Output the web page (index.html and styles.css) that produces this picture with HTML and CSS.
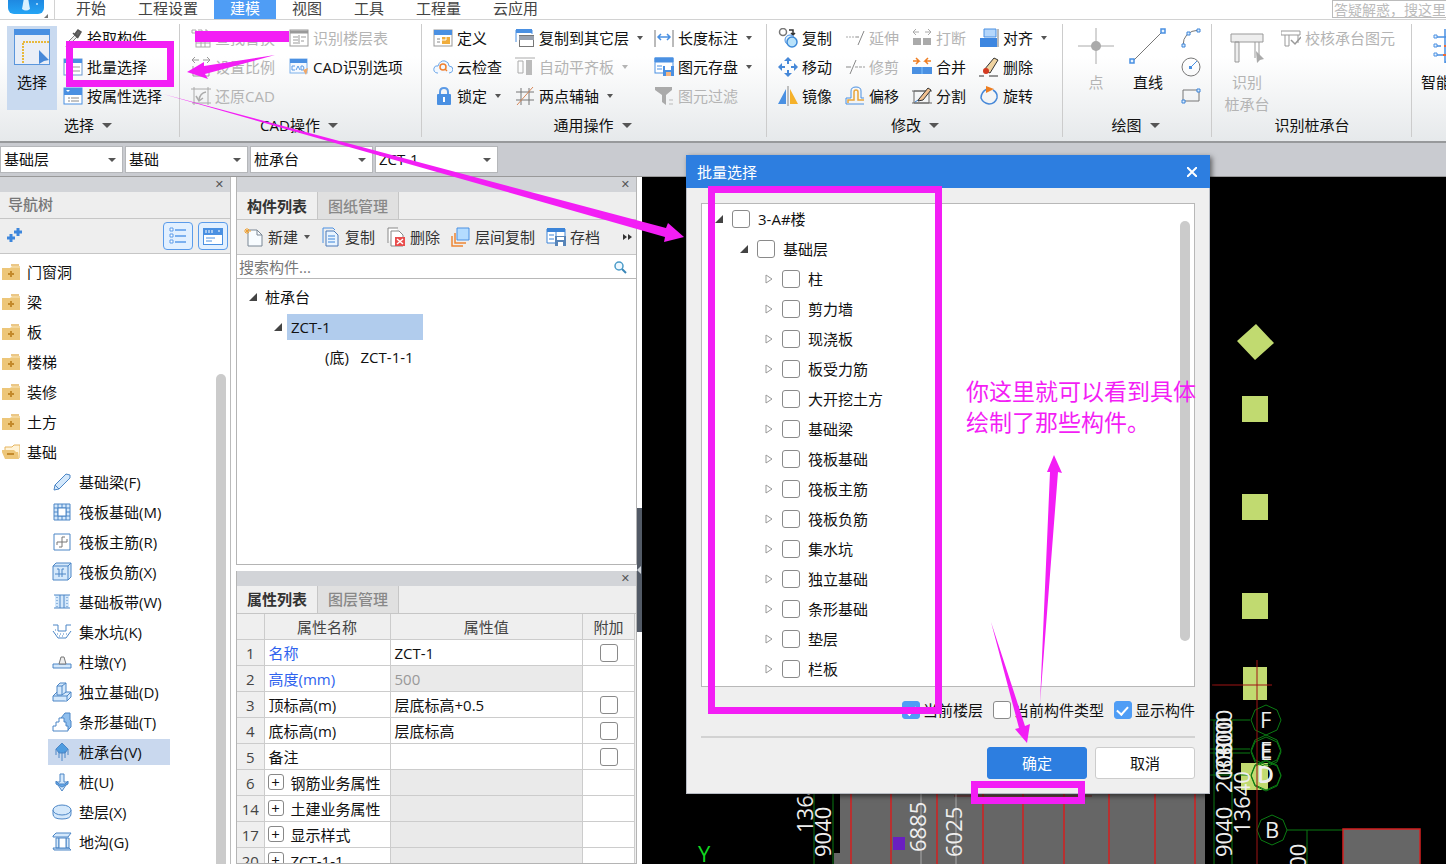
FILE: index.html
```
<!DOCTYPE html>
<html lang="zh-CN">
<head>
<meta charset="utf-8">
<title>批量选择</title>
<link rel="stylesheet" href="styles.css">
</head>
<body>
<svg class="defs" width="0" height="0" aria-hidden="true">
  <symbol id="folder" viewBox="0 0 18 16"><path d="M0 4h18v12H0z" fill="#edc679"/><path d="M9 1h8" stroke="#e5b45f" stroke-width="1.500"/><path d="M8 4l2-2h8v2" fill="#f3d79d"/><path d="M6 10h6M9 7v6" stroke="#c48a2c" stroke-width="2"/></symbol>
  <symbol id="open" viewBox="0 0 8 8"><path d="M8 0v8H0z" fill="#444"/></symbol>
  <symbol id="shut" viewBox="0 0 8 10"><path d="M1 1l6 4-6 4z" fill="#fff" stroke="#999"/></symbol>
</svg>
<header class="menubar">
  <div class="logo"><svg width="54" height="20" viewBox="0 0 54 20"><defs><linearGradient id="lg" x1="0" y1="0" x2="0" y2="1"><stop offset="0" stop-color="#1660c4"/><stop offset="1" stop-color="#25a5f5"/></linearGradient></defs><rect x="8" y="-20" width="36" height="34" rx="6" fill="url(#lg)"/><path d="M24-2h4l2 11q-4 3-8 0z" fill="#d8f0ff"/><circle cx="37" cy="4" r="1" fill="#bfe4ff"/><path d="M48 14v4h-4z" fill="#777"/></svg></div>
  <nav class="menu"><button>开始</button><button>工程设置</button><button class="active">建模</button><button>视图</button><button>工具</button><button>工程量</button><button>云应用</button></nav>
  <input class="ask" type="text" aria-label="答疑解惑" placeholder="答疑解惑，搜这里">
</header>

<section class="ribbon">
  <div class="group g1">
    <div class="tools">
      <button class="big on"><svg width="36" height="36" viewBox="0 0 36 36"><rect x=".5" y=".5" width="35" height="35" fill="#e9eef7" stroke="#5a96dc"/><rect width="36" height="6" fill="#4a90e2"/><path d="M9 34V13h26" fill="none" stroke="#e8b93c" stroke-width="2" stroke-dasharray="2 1"/><path d="M25 21l10 10-5 1-5 3z" fill="#4688d8"/></svg>选择</button>
      <button><svg width="20" height="20" viewBox="0 0 20 20"><path d="M3 19l2-5 7-7 2 2-7 7z" fill="#eee" stroke="#888"/><path d="M10 5l5 5M12 6l3-4 3 2-3 5z" stroke="#555" stroke-width="1.500" fill="#666"/></svg>拾取构件</button>
      <button><svg width="20" height="20" viewBox="0 0 20 20"><rect x="1" y="2" width="18" height="16" fill="#fff" stroke="#6a98cf"/><path d="M1 2h18v4H1z" fill="#4a90e2"/><path d="M4 10h2m3 0h8M4 14h2m3 0h8" stroke="#999"/></svg>批量选择</button>
      <button><svg width="20" height="20" viewBox="0 0 20 20"><rect x="1" y="2" width="18" height="16" fill="#fff" stroke="#4a90e2"/><path d="M1 2h18v7H1z" fill="#4a90e2"/><path d="M3 4h4L5 6z" fill="#fff"/><path d="M5 12h2m1 0h8M5 15h2m1 0h8" stroke="#888"/></svg>按属性选择</button>
    </div>
    <button class="caption">选择<i class="arrow lg"></i></button>
  </div>
  <div class="group g2">
    <div class="tools">
      <button disabled><svg width="20" height="20" viewBox="0 0 20 20" fill="none" stroke="#aaa"><path d="M1 2h4v3H1zM7 2h4v3M14 2h2v4"/><rect x="5" y="8" width="14" height="11"/><path d="M5 12h14M5 15h14M10 8v11M14 8v11"/></svg>查找替换</button>
      <button disabled><svg width="20" height="20" viewBox="0 0 20 20" fill="none" stroke="#999"><path d="M8 3H1l3-3M1 3l3 3M12 3h7l-3-3m3 3l-3 3M2 9v10h16V9"/><path d="M5 15h3m3 0h3" stroke-width="3"/></svg>设置比例</button>
      <button disabled><svg width="20" height="20" viewBox="0 0 20 20" fill="none" stroke="#aaa"><path d="M3 1v18M17 1v18M0 3h20M1 17h19"/><path d="M15 6q-6 1-7 8" stroke-width="1.500"/><path d="M5 10l3 5 4-3" stroke-width="1.500"/></svg>还原CAD</button>
      <button disabled><svg width="20" height="20" viewBox="0 0 20 20" fill="none" stroke="#999"><rect x="1" y="2" width="18" height="16"/><path d="M1 4h18" stroke-width="3"/><path d="M4 9h5M4 12h5M4 15h5M10 7v9M12 9h5M12 13h3"/></svg>识别楼层表</button>
      <button><svg width="20" height="20" viewBox="0 0 20 20"><rect x="1" y="2" width="17" height="14" fill="#f4f9ff" stroke="#7db0ea"/><path d="M1 2h17v4H1z" fill="#4a90e2"/><path d="M6 9H3v4h3M7 13l2-4 2 4M12 9v4h2q2-2 0-4z" fill="none" stroke="#5a9be6"/><path d="M14 13l5-2-2 7z" fill="#f0a868"/></svg>CAD识别选项</button>
    </div>
    <button class="caption">CAD操作<i class="arrow lg"></i></button>
  </div>
  <div class="group g3">
    <div class="tools">
      <button><svg width="20" height="20" viewBox="0 0 20 20"><rect x="1" y="2" width="18" height="16" fill="#fff" stroke="#999"/><path d="M1 2h18v5H1z" fill="#4a90e2"/><path d="M4 11h3m-3 3h3" stroke="#888"/><path d="M9 9h8v7H9z" fill="#f0ad3c"/><path d="M13 9v3H9" stroke="#fff" fill="none"/></svg>定义</button>
      <button><svg width="20" height="20" viewBox="0 0 20 20"><path d="M5 16H4q-4-1-3-5 1-3 4-2 2-6 7-5 4 1 4 5 4 0 4 4-1 3-4 3" fill="#f2f8ff" stroke="#6aa5e8"/><circle cx="10" cy="10" r="3" fill="none" stroke="#f08030" stroke-width="1.500"/><path d="M12 12l2 2" stroke="#f08030" stroke-width="1.500"/></svg>云检查</button>
      <button><svg width="20" height="20" viewBox="0 0 20 20"><path d="M7 9V6q0-4 4-4t4 4v3" fill="none" stroke="#5b9ae6" stroke-width="2"/><rect x="4" y="8" width="14" height="11" rx="1" fill="#4a90e2"/><path d="M11 11v5" stroke="#fff" stroke-width="2"/></svg>锁定<i class="arrow"></i></button>
      <button><svg width="20" height="20" viewBox="0 0 20 20"><path d="M1 14V2h16v4" fill="none" stroke="#4a90e2"/><path d="M1 1h16v4H1z" fill="#4a90e2"/><rect x="4.500" y="7.500" width="14" height="11" fill="#fff" stroke="#777"/><path d="M4 8h15v4H4z" fill="#98a1af"/></svg>复制到其它层<i class="arrow"></i></button>
      <button disabled><svg width="20" height="20" viewBox="0 0 20 20"><path d="M0 1h20" stroke="#aaa"/><path d="M3 4h5v12H3z" fill="none" stroke="#aaa"/><path d="M11 3h6v15h-6z" fill="#bbb"/></svg>自动平齐板<i class="arrow"></i></button>
      <button><svg width="20" height="20" viewBox="0 0 20 20"><path d="M6 2v17M14 2v17M1 6h18M1 14h18" stroke="#777"/><path d="M2 19L18 1" stroke="#d6885b"/></svg>两点辅轴<i class="arrow"></i></button>
      <button><svg width="20" height="20" viewBox="0 0 20 20"><path d="M1 2v17M19 2v17" stroke="#777"/><path d="M4 9h12M7 6L4 9l3 3M13 6l3 3-3 3" fill="none" stroke="#4a90e2" stroke-width="1.500"/></svg>长度标注<i class="arrow"></i></button>
      <button><svg width="20" height="20" viewBox="0 0 20 20"><rect x="1" y="1" width="18" height="15" fill="#fff" stroke="#4a90e2"/><path d="M1 1h18v4H1zM3 9h5M3 12h5" fill="#4a90e2" stroke="#4a90e2"/><rect x="9" y="9" width="11" height="10" fill="#4a90e2"/><path d="M11 9h6v4h-6z" fill="#fff"/><path d="M12 15h5v4h-5z" fill="#f5b580"/></svg>图元存盘<i class="arrow"></i></button>
      <button disabled><svg width="20" height="20" viewBox="0 0 20 20"><path d="M1 1h17v3l-6 5v10l-4-3V9L1 4z" fill="#aaa"/><path d="M15 14h4m-4 4h4" stroke="#bbb"/></svg>图元过滤</button>
    </div>
    <button class="caption">通用操作<i class="arrow lg"></i></button>
  </div>
  <div class="group g4">
    <div class="tools">
      <button><svg width="20" height="20" viewBox="0 0 20 20" fill="none"><circle cx="5" cy="4" r="3.500" stroke="#777" stroke-width="1.500"/><path d="M11 2h4v4m-2-1l2 2 2-2" stroke="#333" stroke-width="1.500"/><circle cx="12" cy="12" r="5" fill="#e4f4fe" stroke="#4a90e2"/><circle cx="14" cy="14" r="5" fill="#b9e2fa" stroke="#3e8ad8" stroke-width="1.500"/></svg>复制</button>
      <button><svg width="20" height="20" viewBox="0 0 20 20"><path d="M10 0l4 4h-3v3H9V4H6zM10 20l4-4h-3v-3H9v3H6zM0 10l4-4v3h3v2H4v3zM20 10l-4-4v3h-3v2h3v3z" fill="#4688d8"/></svg>移动</button>
      <button><svg width="20" height="20" viewBox="0 0 20 20"><path d="M8 3v15H0z" fill="#4a90e2"/><path d="M12 3v15h8z" fill="#f5b12a"/><path d="M10 0v20" stroke="#888"/></svg>镜像</button>
      <button disabled><svg width="20" height="20" viewBox="0 0 20 20"><path d="M1 9h10" stroke="#aaa" stroke-dasharray="2 1"/><path d="M11 9h3M19 3l-6 14" stroke="#888"/></svg>延伸</button>
      <button disabled><svg width="20" height="20" viewBox="0 0 20 20"><path d="M1 10h5M11 3L5 17" stroke="#888"/><path d="M10 10h10" stroke="#999" stroke-dasharray="3 1"/></svg>修剪</button>
      <button><svg width="20" height="20" viewBox="0 0 20 20" fill="none"><path d="M1 18v-6h5V5q0-4 5-4t5 4v7h3" stroke="#4a90e2"/><path d="M3 17v-3h6V6q0-2 2-2t2 2v8h6" stroke="#e8a53c" stroke-width="1.500"/><path d="M1 18h18" stroke="#4a90e2"/></svg>偏移</button>
      <button disabled><svg width="20" height="20" viewBox="0 0 20 20"><path d="M1 10h8v7H1zM11 10h8v7h-8z" fill="#aaa"/><path d="M7 4H1l3-3M1 4l3 3M13 4h6l-3-3m3 3l-3 3" fill="none" stroke="#aaa"/></svg>打断</button>
      <button><svg width="20" height="20" viewBox="0 0 20 20"><path d="M0 10h20v7H0z" fill="#4a90e2"/><path d="M10 10v7" stroke="#7ec3ff"/><path d="M1 4h6L4 1m3 3L4 7M19 4h-6l3-3m-3 3l3 3" fill="none" stroke="#ef7e22" stroke-width="1.500"/></svg>合并</button>
      <button><svg width="20" height="20" viewBox="0 0 20 20" fill="none"><path d="M2 5h15v12H2zM0 5h20M0 17h20" stroke="#666"/><path d="M3 16L14 9" stroke="#3c84d8"/><path d="M7 13l9-11 3 2-8 10-5 1z" fill="#f0c090" stroke="#333"/></svg>分割</button>
      <button><svg width="20" height="20" viewBox="0 0 20 20"><path d="M5 1h12v8H5z" fill="#b4d6fb" stroke="#4a90e2"/><path d="M1 10h17v9H1z" fill="#3d86e0"/><path d="M19 1v18" stroke="#777"/></svg>对齐<i class="arrow"></i></button>
      <button><svg width="20" height="20" viewBox="0 0 20 20"><path d="M5 13L15 1l4 2-8 13z" fill="#f0d3a0" stroke="#333"/><circle cx="7" cy="14" r="3" fill="#d33a20"/><path d="M0 19h5m5 0h9" stroke="#333"/></svg>删除</button>
      <button><svg width="20" height="20" viewBox="0 0 20 20"><path d="M14 4q5 3 4 8-2 6-8 6-6-1-8-6 0-6 6-9" fill="none" stroke="#4688d8" stroke-width="1.500"/><path d="M7 0l8 3-8 4z" fill="#ed7d20"/></svg>旋转</button>
    </div>
    <button class="caption">修改<i class="arrow lg"></i></button>
  </div>
  <div class="group g5">
    <div class="tools">
      <button class="big" disabled><svg width="36" height="36" viewBox="0 0 36 36"><path d="M18 0v36M0 18h36" stroke="#aaa"/><circle cx="18" cy="18" r="5" fill="#aaa"/></svg>点</button>
      <button class="big"><svg width="38" height="36" viewBox="0 0 38 36"><path d="M4 33L34 3" stroke="#777"/><path d="M1 31h4v4H1zM32 1h4v4h-4z" fill="#e9f4ff" stroke="#4a90e2" stroke-width="1.500"/></svg>直线</button>
      <button aria-label="弧"><svg width="20" height="20" viewBox="0 0 20 20"><path d="M2 18Q2 3 18 2" fill="none" stroke="#777"/><path d="M1 16h3v3H1zM6 4h3v3H6zM16 1h3v3h-3z" fill="#dceeff" stroke="#3c84d8"/></svg></button>
      <button aria-label="圆"><svg width="20" height="20" viewBox="0 0 20 20"><circle cx="10" cy="10" r="9" fill="none" stroke="#777"/><path d="M10 10l6-6" stroke="#4a90e2"/><path d="M8 9h3v3H8z" fill="#4a90e2"/></svg></button>
      <button aria-label="矩形"><svg width="20" height="20" viewBox="0 0 20 20"><path d="M2 4h16v11H2z" fill="none" stroke="#777"/><path d="M1 14h3v3H1zM16 3h3v3h-3z" fill="#dceeff" stroke="#3c84d8"/></svg></button>
    </div>
    <button class="caption">绘图<i class="arrow lg"></i></button>
  </div>
  <div class="group g6">
    <div class="tools">
      <button class="big" disabled><svg width="34" height="36" viewBox="0 0 34 36"><path d="M1 6h32v8H1zM5 14h4v20H5zM25 14v16M29 14v14" fill="#eee" stroke="#999"/><path d="M26 23l8 8-4 1-3 3z" fill="#aaa"/></svg>识别<br>桩承台</button>
      <button disabled><svg width="20" height="20" viewBox="0 0 20 20" fill="none" stroke="#999"><path d="M0 3h19v4H0zM4 7v11h4V7M17 7v8"/><path d="M10 12l4 4 6-7" stroke-width="1.500"/></svg>校核承台图元</button>
    </div>
    <button class="caption">识别桩承台</button>
  </div>
  <div class="group g7">
    <div class="tools">
      <button class="big"><svg width="36" height="36" viewBox="0 0 36 36"><path d="M2 9h34M12 1v34M2 18h6M2 27h34M12 34h8" stroke="#4a90e2" stroke-width="1.500"/><path d="M1 7h3v3H1zM1 16h3v3H1zM1 25h3v3H1z" fill="#e9f4ff" stroke="#4a90e2"/><path d="M11 18h12M14 14v8M10 27h10" stroke="#ee6b37" stroke-width="2"/></svg>智能布置</button>
    </div>
  </div>
</section>

<div class="combos">
  <label><select aria-label="楼层"><option>基础层</option></select></label>
  <label><select aria-label="类别"><option>基础</option></select></label>
  <label><select aria-label="构件类型"><option>桩承台</option></select></label>
  <label><select aria-label="构件"><option>ZCT-1</option></select></label>
</div>

<main class="work">
  <aside class="navtree">
    <div class="strip"><button aria-label="关闭">✕</button></div>
    <h2>导航树</h2>
    <div class="navtools">
      <svg width="18" height="18" viewBox="0 0 18 18"><path d="M1 11h8M5 7v8M8 5h8M12 1v8" stroke="#3d86dc" stroke-width="3"/></svg>
      <span class="grow"></span>
      <button aria-label="列表"><svg width="18" height="18" viewBox="0 0 18 18"><path d="M6 3h11M6 9h11M6 15h11" stroke="#5a9bea" stroke-width="1.500"/><path d="M1 1h3v3H1zM1 7h3v3H1zM1 13h3v3H1z" fill="#fff" stroke="#5a9bea"/></svg></button>
      <button aria-label="窗格"><svg width="20" height="18" viewBox="0 0 20 18"><rect x=".5" y="1.500" width="19" height="16" fill="#fff" stroke="#4a90e2"/><path d="M0 1h20v7H0z" fill="#4a90e2"/><path d="M3 3v3m3-3v3m3-3v3M15 4h2" stroke="#fff"/><path d="M3 11h9M3 14h6" stroke="#4a90e2"/></svg></button>
    </div>
    <div class="navlist">
      <ul class="folders">
        <li><svg class="fold"><use href="#folder"/></svg>门窗洞</li>
        <li><svg class="fold"><use href="#folder"/></svg>梁</li>
        <li><svg class="fold"><use href="#folder"/></svg>板</li>
        <li><svg class="fold"><use href="#folder"/></svg>楼梯</li>
        <li><svg class="fold"><use href="#folder"/></svg>装修</li>
        <li><svg class="fold"><use href="#folder"/></svg>土方</li>
        <li><svg class="fold" viewBox="0 0 18 16"><path d="M3 6V3h7l2-2h6v13" fill="#fff3d8" stroke="#e5b45f"/><path d="M-1 6h13l2 2h2l1 7H3z" fill="#edc679"/><path d="M5 10h7" stroke="#c48a2c" stroke-width="2"/></svg>基础</li>
      </ul>
      <ul class="items">
        <li><svg viewBox="0 0 20 20"><path d="M2 18l1-5L14 2l4 1v3L7 17z"/><path d="M3 13l4 4" fill="none"/></svg>基础梁(F)</li>
        <li><svg viewBox="0 0 20 20"><path d="M2 2h16v16H2z"/><path d="M6 2v16M14 2v16M2 6h16M2 14h16M10 2v4m0 8v4M2 10h4m8 0h4"/><path d="M6 6h8v8H6z" fill="#fff"/></svg>筏板基础(M)</li>
        <li><svg viewBox="0 0 20 20"><path d="M2 2h16v16H2z" fill="#fff"/><path d="M10 5v10M5 10h10M5 10v3M15 10v-3M10 5h3M10 15h-3" fill="none" stroke="#777"/></svg>筏板主筋(R)</li>
        <li><svg viewBox="0 0 20 20"><path d="M1 4l3-3h15v14l-3 3H1z"/><path d="M1 4h15v14M16 4l3-3M5 7h2v8M12 7h-2v8M3 12h11" fill="none"/></svg>筏板负筋(X)</li>
        <li><svg viewBox="0 0 20 20"><path d="M3 3h14v13H3z" stroke="none"/><path d="M2 3h16M2 16h16M8 3v13M12 3v13"/><path d="M5 5v10m10-10v10" stroke-dasharray="1 2"/></svg>基础板带(W)</li>
        <li><svg viewBox="0 0 20 20"><path d="M1 3h5v6h8V3h5M1 9l5 7h8l5-7" fill="none"/><path d="M3 8h3M5 12h10M7 14h6" stroke-dasharray="1 2"/></svg>集水坑(K)</li>
        <li><svg viewBox="0 0 20 20"><path d="M1 12h18v4H1z"/><path d="M7 12l2-7h3l2 7z" fill="#eee" stroke="#777"/></svg>柱墩(Y)</li>
        <li><svg viewBox="0 0 20 20"><path d="M1 14l4-4h14v5l-4 4H1z"/><path d="M5 13V4l3-3h6v9l-4 3zM5 4h5v9M10 4l4-3M1 14h14v5M15 14l4-4"/></svg>独立基础(D)</li>
        <li><svg viewBox="0 0 20 20"><path d="M9 6l4-5h5v7l1 1v6l-4 4z" fill="#8fbfee"/><path d="M1 19v-5h3v-4h3V6h5v4h2v4h2v5z" fill="#fff"/></svg>条形基础(T)</li>
        <li class="sel"><svg viewBox="0 0 20 20"><path d="M10 1l6 6-3 4H7L4 7z" fill="#4f9ce0"/><path d="M10 10v9M7 9v7M13 9v7M4 7v6M16 7v6"/></svg>桩承台(V)</li>
        <li><svg viewBox="0 0 20 20"><path d="M8 2h4v8h4l-6 9-6-9h4z"/><path d="M4 9l3 3h6l3-3v3l-6 3-6-3z" fill="#62a6e8"/></svg>桩(U)</li>
        <li><svg viewBox="0 0 20 20"><path d="M1 8v4q0 5 9 5t9-5V8"/><ellipse cx="10" cy="8" rx="9" ry="5"/></svg>垫层(X)</li>
        <li><svg viewBox="0 0 20 20"><path d="M1 4l3-3h15l-3 4H1zM4 6h3v10H4zM14 6h3v10h-3zM1 16h16l2 2H2z"/><path d="M7 6h7v10H7z" fill="#fff"/></svg>地沟(G)</li>
      </ul>
      <div class="thumb"></div>
    </div>
  </aside>

  <div class="docks">
    <section class="dock dock-top">
      <div class="strip"><button aria-label="关闭">✕</button></div>
      <div class="tabs"><button class="cur">构件列表</button><button>图纸管理</button></div>
      <div class="bar">
        <button><svg width="20" height="20" viewBox="0 0 20 20"><path d="M4 3h9l5 5v11H4z" fill="#f8fcff" stroke="#7a8794"/><path d="M13 3v5h5" fill="none" stroke="#7a8794"/><path d="M3 1v6M0 4h7M1 2l4 4m0-4L1 6" stroke="#f0a030"/></svg>新建<i class="arrow"></i></button>
        <button><svg width="20" height="20" viewBox="0 0 20 20"><path d="M2 16V1h10l2 2" fill="none" stroke="#4a90e2"/><path d="M5 4h8l4 4v11H5z" fill="#e9f4ff" stroke="#4a78b8"/><path d="M7 9h7M7 12h7M7 15h7" stroke="#3c84d8"/></svg>复制</button>
        <button><svg width="20" height="20" viewBox="0 0 20 20"><path d="M2 16V1h10M5 4h8l4 4v11H5z" fill="#fff" stroke="#888"/><path d="M9 10h10v9H9z" fill="#e94d4d"/><path d="M11 12l6 5m0-5l-6 5" stroke="#fff" stroke-width="1.500"/></svg>删除</button>
        <button><svg width="20" height="20" viewBox="0 0 20 20"><path d="M1 9v10h11M4 6v10h11" fill="none" stroke="#ee8735" stroke-width="1.500"/><path d="M6 1h12v12H6z" fill="#b4dcff" stroke="#4a90e2"/></svg>层间复制</button>
        <button><svg width="20" height="20" viewBox="0 0 20 20"><path d="M1 2h18v14H1z" fill="#fff" stroke="#3c84d8"/><path d="M1 1h18v4H1z" fill="#3c84d8"/><path d="M3 8h5M3 12h5M10 5v5" stroke="#3c84d8"/><path d="M9 9h11v10H9z" fill="#5784b8"/><path d="M11 10h7v3h-7zM12 15h5v4h-5z" fill="#fff"/></svg>存档</button>
        <button class="more" aria-label="更多"><svg width="10" height="8" viewBox="0 0 10 8"><path d="M0 1l4 3-4 3zM5 1l4 3-4 3z" fill="#333"/></svg></button>
      </div>
      <div class="find"><input type="text" aria-label="搜索构件" placeholder="搜索构件..."><svg width="14" height="14" viewBox="0 0 14 14"><circle cx="6" cy="6" r="4" fill="#eef8ff" stroke="#4a9bc8" stroke-width="1.500"/><path d="M9 9l4 4" stroke="#3a86b8" stroke-width="2"/></svg></div>
      <ul class="parts">
        <li><svg class="tri"><use href="#open"/></svg><span>桩承台</span></li>
        <li class="l2"><svg class="tri"><use href="#open"/></svg><span class="hit">ZCT-1</span></li>
        <li class="l3"><span>(底)&nbsp;&nbsp; ZCT-1-1</span></li>
      </ul>
    </section>

    <section class="dock dock-bottom">
      <div class="strip"><button aria-label="关闭">✕</button></div>
      <div class="tabs"><button class="cur">属性列表</button><button>图层管理</button></div>
      <table class="props">
        <colgroup><col class="c1"><col class="c2"><col><col class="c4"></colgroup>
        <thead><tr><th></th><th>属性名称</th><th>属性值</th><th>附加</th></tr></thead>
        <tbody>
          <tr><th>1</th><td class="key">名称</td><td>ZCT-1</td><td class="add"><input type="checkbox" aria-label="名称附加"></td></tr>
          <tr><th>2</th><td class="key">高度(mm)</td><td class="ro">500</td><td></td></tr>
          <tr><th>3</th><td>顶标高(m)</td><td>层底标高+0.5</td><td class="add"><input type="checkbox" aria-label="顶标高附加"></td></tr>
          <tr><th>4</th><td>底标高(m)</td><td>层底标高</td><td class="add"><input type="checkbox" aria-label="底标高附加"></td></tr>
          <tr><th>5</th><td>备注</td><td></td><td class="add"><input type="checkbox" aria-label="备注附加"></td></tr>
          <tr><th>6</th><td><button class="plus">+</button>钢筋业务属性</td><td class="ro"></td><td></td></tr>
          <tr><th>14</th><td><button class="plus">+</button>土建业务属性</td><td class="ro"></td><td></td></tr>
          <tr><th>17</th><td><button class="plus">+</button>显示样式</td><td class="ro"></td><td></td></tr>
          <tr><th>20</th><td><button class="plus">+</button>ZCT-1-1</td><td class="ro"></td><td></td></tr>
        </tbody>
      </table>
    </section>
  </div>

  <div class="splitter"><div class="grip"><svg width="5" height="8" viewBox="0 0 5 8"><path d="M4 0v8L0 4z" fill="#cfd4da"/></svg></div></div>

  <div class="canvas">
    <svg width="804" height="687" viewBox="642 177 804 687">
      <g fill="#c1da70"><path d="M1256 324l18 19-19 17-18-19zM1242 396h26v26h-26zM1242 494h26v26h-26zM1242 593h26v26h-26zM1243 667h24v33h-24zM1241 763h27v27h-27z"/></g>
      <path d="M840 790h365v74H834v-11h6z" fill="#666"/>
      <path d="M851 790v74M891 790v74M937 790v74M983 790v74M1023 790v74M1064 790v74M1109 790v74M1155 790v74M1195 790v74" stroke="#d42020" stroke-width="1.500"/>
      <path d="M954 796h138" stroke="#6d2020"/>
      <path d="M921 794v70M956 794v70" stroke="#aaa"/>
      <path d="M893 837h12v13h-12z" fill="#6a1fc0"/>
      <g fill="none" stroke="#0a7a12">
        <path d="M814 790v74M833 790v74M1214 720v144M1232 720v144M1210 720h40M1210 749h40M1210 753h40M1210 775h40M1287 830h56M1307 830v34"/>
        <path id="oct" d="M1281 720l-4 10-11 5-11-5-4-10 4-10 11-5 11 5z"/>
        <use href="#oct" y="30"/><use href="#oct" y="32"/><use href="#oct" y="55"/><use href="#oct" y="56"/><use href="#oct" x="6" y="110"/>
      </g>
      <path d="M1343 864v-35h77v35" fill="#666" stroke="#d42020" stroke-width="1.500"/>
      <path d="M1257 660v204M1212 685h60" stroke="#a01414"/>
      <g class="cad">
        <text transform="translate(813 833) rotate(-90)">13640</text>
        <text transform="translate(831 857) rotate(-90)">9040</text>
        <text transform="translate(926 852) rotate(-90)">6885</text>
        <text transform="translate(962 857) rotate(-90)">6025</text>
        <text transform="translate(1232 857) rotate(-90)">9040</text>
        <text transform="translate(1250 834) rotate(-90)">13640</text>
        <text transform="translate(1232 793) rotate(-90)">2000</text>
        <text transform="translate(1232 780) rotate(-90)">10800</text>
        <text transform="translate(1232 772) rotate(-90)">3300</text>
        <text transform="translate(1232 760) rotate(-90)">3000</text>
        <text transform="translate(1306 894) rotate(-90)">3000</text>
        <text x="1260" y="728">F</text><text x="1260" y="758">E</text><text x="1260" y="760">E</text><text x="1257" y="782">D</text><text x="1258" y="783">D</text><text x="1265" y="838">B</text>
        <text x="698" y="862" fill="#10d820">Y</text>
      </g>
    </svg>
  </div>
</main>

<div class="dialog" role="dialog" aria-label="批量选择">
  <div class="dlg-title"><span>批量选择</span><button aria-label="关闭"><svg width="10" height="10" viewBox="0 0 10 10"><path d="M0 0l10 10M10 0L0 10" stroke="#fff" stroke-width="2"/></svg></button></div>
  <div class="dlg-body">
    <ul class="tree">
      <li><svg class="tri"><use href="#open"/></svg><label><input type="checkbox">3-A#楼</label></li>
      <li class="l2"><svg class="tri"><use href="#open"/></svg><label><input type="checkbox">基础层</label></li>
      <li class="l3"><svg class="shut"><use href="#shut"/></svg><label><input type="checkbox">柱</label></li>
      <li class="l3"><svg class="shut"><use href="#shut"/></svg><label><input type="checkbox">剪力墙</label></li>
      <li class="l3"><svg class="shut"><use href="#shut"/></svg><label><input type="checkbox">现浇板</label></li>
      <li class="l3"><svg class="shut"><use href="#shut"/></svg><label><input type="checkbox">板受力筋</label></li>
      <li class="l3"><svg class="shut"><use href="#shut"/></svg><label><input type="checkbox">大开挖土方</label></li>
      <li class="l3"><svg class="shut"><use href="#shut"/></svg><label><input type="checkbox">基础梁</label></li>
      <li class="l3"><svg class="shut"><use href="#shut"/></svg><label><input type="checkbox">筏板基础</label></li>
      <li class="l3"><svg class="shut"><use href="#shut"/></svg><label><input type="checkbox">筏板主筋</label></li>
      <li class="l3"><svg class="shut"><use href="#shut"/></svg><label><input type="checkbox">筏板负筋</label></li>
      <li class="l3"><svg class="shut"><use href="#shut"/></svg><label><input type="checkbox">集水坑</label></li>
      <li class="l3"><svg class="shut"><use href="#shut"/></svg><label><input type="checkbox">独立基础</label></li>
      <li class="l3"><svg class="shut"><use href="#shut"/></svg><label><input type="checkbox">条形基础</label></li>
      <li class="l3"><svg class="shut"><use href="#shut"/></svg><label><input type="checkbox">垫层</label></li>
      <li class="l3"><svg class="shut"><use href="#shut"/></svg><label><input type="checkbox">栏板</label></li>
      <li class="treebar" aria-hidden="true"></li>
    </ul>
    <div class="opts">
      <label><input type="checkbox" checked>当前楼层</label>
      <label><input type="checkbox">当前构件类型</label>
      <label><input type="checkbox" checked>显示构件</label>
    </div>
    <div class="acts"><button class="ok">确定</button><button>取消</button></div>
  </div>
</div>

<svg class="marks" width="1446" height="864" viewBox="0 0 1446 864">
  <g fill="none" stroke="#f31ef5" stroke-width="7">
    <path d="M69.500 44.500h101v39h-101zM711.500 189.500h227v521h-227zM974.500 784.500h107v16h-107z"/>
  </g>
  <g fill="#f31ef5">
    <path d="M195 31h94v11h-94z"/>
    <path d="M275 55l-70 19 3 5-21-7 17-10v4z"/>
    <path d="M163 94L666 228l2-5 16 14-20 5 1-5z"/>
    <path d="M1040 703l10-231h-3l7-17 8 18-4-1z"/>
    <path d="M991 622l34 104 5-2-3 19-12-14 4-1z"/>
  </g>
</svg>
<p class="note">你这里就可以看到具体<br>绘制了那些构件。</p>
</body>
</html>
```
FILE: styles.css
```
* { box-sizing: border-box; }
html, body { height: 100%; }
body {
  margin: 0;
  display: flex;
  flex-direction: column;
  position: relative;
  overflow: hidden;
  background: #fff;
  color: #111;
  font: 15px/20px "Open Sans", "Noto Sans CJK SC", sans-serif;
}
button, input, select { font: inherit; color: inherit; }
button { border: 0; padding: 0; background: none; white-space: nowrap; }
ul { list-style: none; margin: 0; padding: 0; }
svg { flex: none; display: block; }
.defs { position: absolute; }
input[type="checkbox"] {
  appearance: none;
  flex: none;
  width: 18px;
  height: 18px;
  margin: 0;
  border: 1px solid #8a8a8a;
  border-radius: 3px;
  background: #fff;
}
input[type="checkbox"]:checked {
  border-color: #4f9df5;
  background: #4f9df5;
}
input[type="checkbox"]:checked::after {
  content: "";
  display: block;
  width: 5px;
  height: 9px;
  margin: 2px auto 0;
  border: solid #fff;
  border-width: 0 2px 2px 0;
  transform: rotate(42deg);
}
.arrow {
  margin-left: 8px;
  border: 3px solid transparent;
  border-top: 4px solid #555;
  border-bottom: 0;
}
.arrow.lg { border-width: 5px 5px 0; }

/* menu bar */
.menubar { flex: none; display: flex; height: 20px; border-bottom: 1px solid #d2d2d2; overflow: hidden; }
.logo { width: 54px; }
.menu { display: flex; flex: 1; padding-left: 5px; border-left: 1px solid #d2d2d2; color: #444; }
.menu button { padding: 0 16px; height: 20px; line-height: 16px; display: flex; }
.menu .active { background: #4f9df5; color: #fff; }
.ask { width: 114px; height: 18px; border: 1px solid #bbb; border-right: 0; padding: 0 1px; font-size: 14px; line-height: 16px; }
.ask::placeholder { color: #bbb; opacity: 1; }

/* ribbon */
.ribbon {
  flex: none;
  display: flex;
  height: 123px;
  padding-top: 3px;
  overflow: hidden;
  background: linear-gradient(#fff 30%, #e6e9eb);
  border-bottom: 2px solid #97999b;
}
.group { flex: none; display: flex; flex-direction: column; position: relative; }
.group::after { content: ""; position: absolute; right: 0; top: 1px; height: 113px; border-right: 1px solid #ccc; }
.tools { display: grid; grid-template-rows: repeat(3, 29px); grid-auto-flow: column; justify-content: start; }
.tools button { display: flex; align-items: center; gap: 4px; }
.tools button:disabled { color: #b4b4b4; }
.tools button:disabled .arrow { border-top-color: #b4b4b4; }
.tools .arrow { margin-left: 4px; }
.tools .big { grid-row: span 3; flex-direction: column; justify-content: flex-start; align-items: center; gap: 7px; padding-top: 5px; line-height: 22px; white-space: normal; }
.tools .big.on { background: #c9daf0; margin: 3px 6px 0 0; padding-top: 3px; gap: 6px; }
.caption { height: 30px; display: flex; align-items: center; justify-content: center; }
.g1 { width: 180px; }
.g1 .tools { padding-left: 7px; grid-template-columns: 56px auto; }
.g1 .caption { padding-right: 4px; }
.g2 { width: 242px; }
.g2 .tools { padding-left: 11px; grid-template-columns: 98px auto; }
.g2 .caption { padding-right: 4px; }
.g3 { width: 345px; }
.g3 .tools { padding-left: 11px; grid-template-columns: 82px 139px auto; }
.g3 .caption { padding-right: 4px; }
.g4 { width: 296px; }
.g4 .tools { padding-left: 11px; grid-template-columns: repeat(3, 67px) auto; }
.g5 { width: 149px; }
.g5 .tools { padding-left: 14px; grid-template-columns: 38px 66px 24px; }
.g5 .caption { padding-right: 4px; }
.g6 { width: 200px; }
.g6 .tools { padding-left: 12px; grid-template-columns: 46px auto; column-gap: 11px; }
.g7 { width: 100px; }
.g7 .tools { padding-left: 9px; }

/* combo boxes */
.combos { flex: none; display: flex; gap: 2px; height: 34px; padding: 3px 0; background: #c9cbd0; border-bottom: 1px solid #999; }
.combos label { position: relative; width: 123px; background: #fff; border: 1px solid #b5b7ba; }
.combos label::after { content: ""; position: absolute; right: 6px; top: 11px; border: 4px solid transparent; border-top-color: #555; border-bottom: 0; }
.combos select { appearance: none; display: block; width: 100%; height: 24px; border: 0; padding: 0 3px; background: none; }

/* docks */
.work { flex: 1; min-height: 0; display: flex; }
.strip { flex: none; height: 15px; background: #d2d4d8; text-align: right; }
.strip button { display: block; margin-left: auto; padding-right: 6px; font: 11px/15px "DejaVu Sans", sans-serif; color: #555; }
.navtree { flex: none; width: 231px; display: flex; flex-direction: column; border-right: 1px solid #bbb; }
.navtree h2 { flex: none; height: 27px; margin: 0; padding-left: 8px; font-size: 15px; line-height: 25px; font-weight: 500; color: #777; background: #eee; border-bottom: 1px solid #c6c6c6; }
.navtools { flex: none; height: 35px; display: flex; align-items: center; gap: 5px; padding: 0 2px 0 6px; background: #eee; border-bottom: 1px solid #c6c6c6; }
.grow { flex: 1; }
.navtools button { width: 30px; height: 28px; display: flex; align-items: center; justify-content: center; border: 1px solid #5a9bea; border-radius: 4px; background: #e2f0ff; }
.navlist { flex: 1; min-height: 0; position: relative; overflow: hidden; padding-top: 3px; }
.navlist li { display: flex; align-items: center; height: 30px; }
.folders li { padding-left: 2px; gap: 7px; }
.fold { width: 18px; height: 16px; }
.items { padding-left: 48px; }
.navlist .items li { width: 122px; height: 26px; margin: 2px 0 4px; padding-left: 4px; gap: 7px; }
.items svg { width: 20px; height: 20px; fill: #d4e8fb; stroke: #4c86c6; }
.items .sel { background: #c9d8ee; }
.thumb { position: absolute; right: 4px; top: 120px; bottom: 0; width: 10px; border-radius: 5px 5px 0 0; background: #cbcbcb; }

.docks { flex: none; width: 401px; margin-left: 5px; display: flex; flex-direction: column; gap: 6px; }
.dock { min-height: 0; display: flex; flex-direction: column; border: solid #b4b4b4; border-width: 0 1px 1px; overflow: hidden; }
.dock-top { flex: 388 1 0; }
.dock-bottom { flex: 293 1 0; background: #efefef; }
.tabs { flex: none; display: flex; height: 28px; background: #eee; border-bottom: 1px solid #c6c6c6; }
.tabs button { width: 81px; color: #888; font-weight: 500; background: #e0e0e0; border-right: 1px solid #c6c6c6; }
.tabs .cur { color: #333; font-weight: 700; background: #efefef; }
.bar { flex: none; display: flex; align-items: center; gap: 11px; height: 35px; padding: 0 3px 0 7px; background: #eee; border-bottom: 1px solid #c6c6c6; color: #333; }
.bar button { display: flex; align-items: center; gap: 4px; }
.bar .arrow { margin-left: 2px; }
.bar .more { margin-left: auto; }
.find { flex: none; display: flex; align-items: center; height: 24px; padding-right: 9px; border-bottom: 1px solid #b8b8b8; }
.find input { flex: 1; min-width: 0; border: 0; outline: 0; padding: 0 2px; }
.find input::placeholder { color: #777; opacity: 1; }
.parts { padding: 3px 0 0 12px; }
.parts li { height: 30px; display: flex; align-items: center; gap: 8px; }
.parts .l2 { padding-left: 25px; gap: 5px; }
.parts .l3 { padding-left: 76px; }
.parts .hit { width: 136px; line-height: 26px; padding-left: 4px; background: #b1cced; }
.tri { width: 8px; height: 8px; }

.props { width: 398px; flex: none; border-collapse: collapse; table-layout: fixed; background: #fff; }
.props .c1 { width: 27px; }
.props .c2 { width: 126px; }
.props .c4 { width: 52px; }
.props th, .props td { height: 26px; padding: 0 4px; border: 1px solid #ccc; border-top: 0; border-left: 0; white-space: nowrap; text-align: left; }
.props th { background: #efefef; color: #444; font-weight: 400; text-align: center; padding: 0; }
.props .key { color: #2e62ee; }
.props .ro { background: #eaeaea; color: #999; }
.props .add { padding: 0; text-align: center; }
.props .add input { display: block; margin: 0 auto; }
.plus { width: 16px; height: 16px; margin: 0 7px 0 -1px; border: 1px solid #888; border-radius: 3px; background: #fff; line-height: 12px; vertical-align: 1px; }

.splitter { flex: none; width: 5px; padding-top: 331px; background: #fff; }
.grip { height: 124px; display: flex; align-items: center; background: #525a66; }
.canvas { flex: 1; min-width: 0; overflow: hidden; background: #000; }
.cad { font-size: 22px; fill: #eee; }

/* dialog */
.dialog { position: absolute; left: 686px; top: 155px; width: 524px; background: #efefef; border: 1px solid #b8bcc4; border-top: 0; box-shadow: 2px 2px 5px #0008; }
.dlg-title { height: 33px; margin: 0 -1px; padding: 0 13px 0 11px; display: flex; align-items: center; justify-content: space-between; background: #2d7ee0; color: #fff; }
.dlg-body { padding: 15px 14px 14px; }
.tree { position: relative; height: 484px; overflow: hidden; padding: 0 0 0 13px; border: 1px solid #b8b8b8; background: #fff; }
.tree li { display: flex; align-items: center; height: 30px; gap: 9px; }
.tree .l2 { padding-left: 25px; }
.tree .l3 { padding-left: 50px; }
.tree label { display: flex; align-items: center; gap: 8px; }
.shut { width: 8px; height: 10px; }
.tree .treebar { position: absolute; right: 4px; top: 17px; width: 10px; height: 420px; border-radius: 5px; background: #cbcbcb; }
.opts { display: flex; justify-content: flex-end; gap: 10px; padding: 14px 0 17px; border-bottom: 2px solid #d2d2d2; }
.opts label { display: flex; align-items: center; gap: 3px; line-height: 18px; }
.acts { display: flex; justify-content: flex-end; gap: 8px; padding-top: 9px; }
.acts button { width: 100px; height: 32px; border: 1px solid #ccc; border-radius: 3px; background: #fff; }
.acts .ok { background: #2d7ee0; border-color: #2d7ee0; color: #fff; }

/* annotations */
.marks { position: absolute; left: 0; top: 0; pointer-events: none; }
.note { position: absolute; left: 966px; top: 376px; margin: 0; font-size: 23px; line-height: 31px; color: #f31ef5; white-space: nowrap; }
```
